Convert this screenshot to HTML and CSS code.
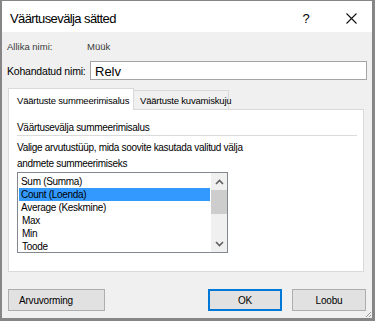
FILE: index.html
```html
<!DOCTYPE html>
<html lang="et">
<head>
  <meta charset="UTF-8">
  <title>Väärtusevälja sätted</title>
  <link rel="stylesheet" href="styles.css">
</head>
<body>
  <section class="dialog">
    <div class="titlebar">
      <span class="title">Väärtusevälja sätted</span>
      <span class="help">?</span>
      <span class="close">
        <svg width="11" height="11" viewBox="0 0 11 11"><path d="M0.5 0.5 L10.5 10.5 M10.5 0.5 L0.5 10.5" stroke="#111" stroke-width="1.1" fill="none"/></svg>
      </span>
    </div>

    <div class="content">
      <div class="source">
        <span class="source-label">Allika nimi:</span>
        <span class="source-value">Müük</span>
      </div>

      <div class="custom">
        <label class="custom-label" for="name">Kohandatud nimi:</label>
        <input type="text" id="name" class="custom-input" value="Relv">
      </div>

      <div class="tabs">
        <div class="tab active">Väärtuste summeerimisalus</div>
        <div class="tab">Väärtuste kuvamiskuju</div>
      </div>

      <div class="panel">
        <div class="section-title">Väärtusevälja summeerimisalus</div>
        <p class="hint">Valige arvutustüüp, mida soovite kasutada valitud välja<br>andmete summeerimiseks</p>

        <div class="listbox">
          <ul class="items">
            <li>Sum (Summa)</li>
            <li class="selected">Count (Loenda)</li>
            <li>Average (Keskmine)</li>
            <li class="indent">Max</li>
            <li class="indent">Min</li>
            <li class="indent">Toode</li>
          </ul>
          <div class="scrollbar">
            <div class="arrow">
              <svg width="9" height="6" viewBox="0 0 9 6"><path d="M1 5 L4.5 1.5 L8 5" stroke="#606060" stroke-width="1.6" fill="none"/></svg>
            </div>
            <div class="thumb"></div>
            <div class="track"></div>
            <div class="arrow">
              <svg width="9" height="6" viewBox="0 0 9 6"><path d="M1 1 L4.5 4.5 L8 1" stroke="#606060" stroke-width="1.6" fill="none"/></svg>
            </div>
          </div>
        </div>
      </div>

      <div class="buttons">
        <button type="button" class="btn format">Arvuvorming</button>
        <span class="spacer"></span>
        <button type="button" class="btn default">OK</button>
        <button type="button" class="btn">Loobu</button>
      </div>
    </div>

    <svg class="grip" width="9" height="9" viewBox="0 0 9 9">
      <path d="M8 3 L3 8 M8 6 L6 8" stroke="#9a9a9a" stroke-width="1" fill="none"/>
    </svg>
  </section>
</body>
</html>
```

FILE: styles.css
```css
* {
  box-sizing: border-box;
}

html, body {
  margin: 0;
}

body {
  width: 375px;
  height: 321px;
  background-color: #f0f0f0;
  font-family: "Liberation Sans", Arial, sans-serif;
  color: #000;
}

.dialog {
  position: relative;
  height: 321px;
  display: flex;
  flex-direction: column;
  background-color: #f0f0f0;
  border-style: solid;
  border-color: #868686;
  border-width: 1px 3px 3px 2px;
}

/* title bar */
.titlebar {
  height: 31px;
  flex: none;
  display: flex;
  align-items: center;
  padding: 3px 0 0 8px;
  background-color: #fff;
}

.title {
  flex: 1;
  font-size: 13px;
  letter-spacing: -0.6px;
}

.help {
  width: 18px;
  margin-right: 27px;
  text-align: center;
  font-size: 13px;
}

.close {
  width: 18px;
  margin-right: 12px;
  display: flex;
  justify-content: center;
}

/* body */
.content {
  flex: 1;
  display: flex;
  flex-direction: column;
  padding: 8px 5px 0 5px;
}

.source {
  display: flex;
  height: 14px;
  line-height: 14px;
  font-size: 9.5px;
  color: #3a3a3a;
}

.source-label {
  width: 80px;
}

.custom {
  display: flex;
  align-items: center;
  margin-top: 7px;
}

.custom-label {
  width: 83px;
  font-size: 10.5px;
  letter-spacing: -0.2px;
}

.custom-input {
  width: 277px;
  height: 19px;
  border: 1px solid #a5a5a5;
  padding: 2px 0 0 4px;
  font-family: "Liberation Sans", Arial, sans-serif;
  font-size: 13px;
  color: #000;
  background-color: #fff;
}

.custom-input:focus {
  outline: none;
}

/* tabs */
.tabs {
  display: flex;
  align-items: flex-end;
  height: 21px;
  margin: 8px 0 0 1px;
  font-size: 9.5px;
  letter-spacing: -0.2px;
}

.tab {
  width: 95px;
  height: 19px;
  padding: 3px 0 0 6px;
  line-height: 14px;
  white-space: nowrap;
  border: 1px solid #d9d9d9;
  border-left: none;
  border-bottom: none;
  background-color: #f0f0f0;
}

.tab.active {
  position: relative;
  z-index: 1;
  width: 126px;
  height: 22px;
  margin-bottom: -1px;
  padding: 5px 0 0 8px;
  border-left: 1px solid #d9d9d9;
  background-color: #fff;
}

.panel {
  height: 163px;
  margin: 0 3px 0 1px;
  padding: 0 6px 0 8px;
  background-color: #fff;
  border: 1px solid #d9d9d9;
  font-size: 10px;
  letter-spacing: -0.3px;
}

.section-title {
  margin-top: 11px;
  height: 15px;
  line-height: 14px;
  border-bottom: 1px solid #dadada;
}

.hint {
  margin: 4px 0 0 0;
  line-height: 16px;
}

/* list box */
.listbox {
  display: flex;
  width: 211px;
  height: 81px;
  border: 1px solid #828790;
  background-color: #fff;
}

.items {
  flex: 1;
  list-style: none;
  margin: 0;
  padding: 2px 1px 0 1px;
  overflow: hidden;
}

.items li {
  height: 13px;
  line-height: 14px;
  padding-left: 2px;
  white-space: nowrap;
}

.items li.indent {
  padding-left: 3px;
}

.items li.selected {
  background-color: #3399ff;
}

.scrollbar {
  width: 16px;
  display: flex;
  flex-direction: column;
  background-color: #f0f0f0;
}

.arrow {
  height: 17px;
  display: flex;
  align-items: center;
  justify-content: center;
}

.thumb {
  height: 24px;
  background-color: #cdcdcd;
}

.track {
  flex: 1;
}

/* buttons */
.buttons {
  display: flex;
  margin-top: 17px;
  padding: 0 1px;
}

.spacer {
  flex: 1;
}

.btn {
  width: 74px;
  height: 22px;
  margin: 0;
  border: 1px solid #adadad;
  background-color: #e1e1e1;
  font-family: "Liberation Sans", Arial, sans-serif;
  font-size: 10px;
  letter-spacing: -0.2px;
  color: #000;
  padding: 0;
}

.btn + .btn {
  margin-left: 10px;
}

.btn.format {
  width: 97px;
  text-align: left;
  padding-left: 10px;
}

.btn.default {
  border: 2px solid #0078d7;
}

.grip {
  position: absolute;
  right: 0;
  bottom: 0;
}
```
